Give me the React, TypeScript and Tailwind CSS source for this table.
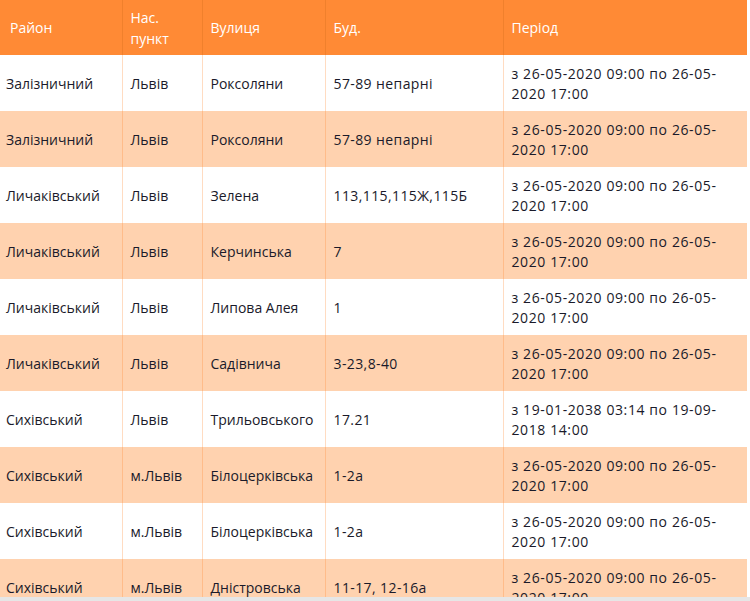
import React from 'react';

type Row = {
  district: string;
  city: string;
  street: string;
  house: string;
  from: string;
  to: string;
};

const ROWS: Row[] = [
  { district: 'Залізничний', city: 'Львів', street: 'Роксоляни', house: '57-89 непарні', from: '26-05-2020 09:00', to: '26-05-2020 17:00' },
  { district: 'Залізничний', city: 'Львів', street: 'Роксоляни', house: '57-89 непарні', from: '26-05-2020 09:00', to: '26-05-2020 17:00' },
  { district: 'Личаківський', city: 'Львів', street: 'Зелена', house: '113,115,115Ж,115Б', from: '26-05-2020 09:00', to: '26-05-2020 17:00' },
  { district: 'Личаківський', city: 'Львів', street: 'Керчинська', house: '7', from: '26-05-2020 09:00', to: '26-05-2020 17:00' },
  { district: 'Личаківський', city: 'Львів', street: 'Липова Алея', house: '1', from: '26-05-2020 09:00', to: '26-05-2020 17:00' },
  { district: 'Личаківський', city: 'Львів', street: 'Садівнича', house: '3-23,8-40', from: '26-05-2020 09:00', to: '26-05-2020 17:00' },
  { district: 'Сихівський', city: 'Львів', street: 'Трильовського', house: '17.21', from: '19-01-2038 03:14', to: '19-09-2018 14:00' },
  { district: 'Сихівський', city: 'м.Львів', street: 'Білоцерківська', house: '1-2а', from: '26-05-2020 09:00', to: '26-05-2020 17:00' },
  { district: 'Сихівський', city: 'м.Львів', street: 'Білоцерківська', house: '1-2а', from: '26-05-2020 09:00', to: '26-05-2020 17:00' },
  { district: 'Сихівський', city: 'м.Львів', street: 'Дністровська', house: '11-17, 12-16а', from: '26-05-2020 09:00', to: '26-05-2020 17:00' },
];

const cell =
  'h-[56px] border-l border-[#ff8a35]/30 pt-[2px] pl-[8px] pr-[6px] align-middle first:border-l-0 first:pl-[6px]';

// splits "26-05-2020 17:00" so the line can break after the second dash, as in the source page
const Period = ({ from, to }: { from: string; to: string }) => {
  const head = to.slice(0, 6);
  const tail = to.slice(6);
  return (
    <>
      з {from} по {head}
      <wbr />
      {tail}
    </>
  );
};

const App = () => {
  return (
    <div className="h-[601px] w-[750px] overflow-hidden bg-white font-['Open_Sans',sans-serif]">
      <div className="h-[597px] w-[747px] overflow-hidden">
        <table className="w-[747px] table-fixed border-collapse text-[14px] leading-[20px] text-[#1a1a2a]">
          <colgroup>
            <col className="w-[122px]" />
            <col className="w-[80px]" />
            <col className="w-[123px]" />
            <col className="w-[178px]" />
            <col className="w-[244px]" />
          </colgroup>
          <thead>
            <tr className="bg-[#ff8a35] text-left text-white">
              <th className="h-[55px] pl-[10px] align-middle font-normal">Район</th>
              <th className="h-[55px] border-l border-[#f0802c] pl-[8px] align-middle font-normal leading-[21px]">
                Нас.
                <br />
                пункт
              </th>
              <th className="h-[55px] border-l border-[#f0802c] pl-[8px] align-middle font-normal">Вулиця</th>
              <th className="h-[55px] border-l border-[#f0802c] pl-[8px] align-middle font-normal">Буд.</th>
              <th className="h-[55px] border-l border-[#f0802c] pl-[8px] align-middle font-normal">Період</th>
            </tr>
          </thead>
          <tbody>
            {ROWS.map((row, i) => (
              <tr key={i} className="odd:bg-white even:bg-[#ffd2af]">
                <td className={cell}>{row.district}</td>
                <td className={cell}>{row.city}</td>
                <td className={cell}>{row.street}</td>
                <td className={`${cell} tracking-[0.4px]`}>{row.house}</td>
                <td className={`${cell} pr-[22px] tracking-[0.6px]`}>
                  <Period from={row.from} to={row.to} />
                </td>
              </tr>
            ))}
          </tbody>
        </table>
      </div>
      <div className="h-[4px] w-full bg-[#e6e6e6]" />
    </div>
  );
};

export default App;
